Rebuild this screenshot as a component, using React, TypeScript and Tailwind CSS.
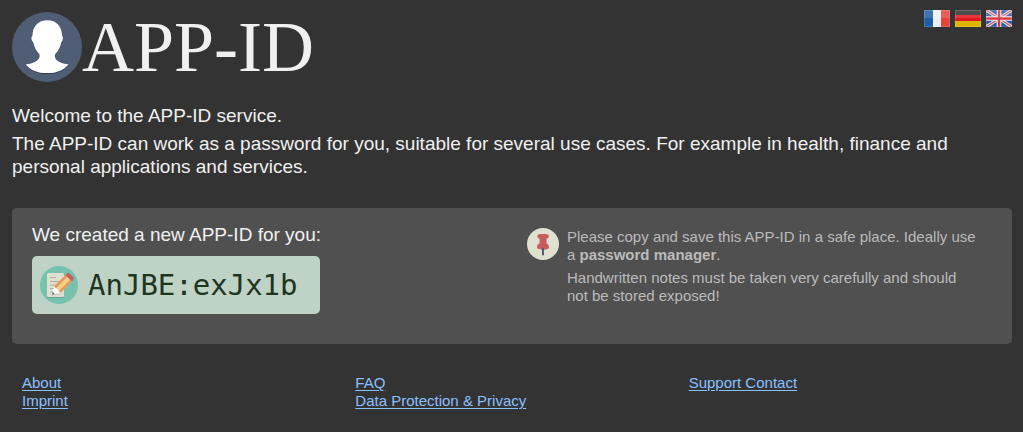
import React from "react";

function AvatarLogo() {
  return (
    <svg viewBox="0 0 70 70" className="size-[70px] shrink-0" aria-hidden="true">
      <defs>
        <filter id="soft" x="-20%" y="-20%" width="140%" height="140%">
          <feDropShadow dx="0" dy="1" stdDeviation="0.7" floodColor="#1c2638" floodOpacity="0.6" />
        </filter>
      </defs>
      <circle cx="35" cy="35" r="35" fill="#4f5e75" />
      <path
        filter="url(#soft)"
        fill="#fff"
        d="M35.3 8.3C44.5 8.3 49.8 14.5 50 23.5C51.3 24.8 50.9 29 49.2 30.4C48.4 35 46 39 43.2 42C42 45.5 44 48.4 48 50.2C50.6 51.4 53.5 52 56.5 52.4C51 58.4 43.5 61.1 35.2 61.1C26.7 61.1 19 58.4 13.7 52.4C16.8 52 19.6 51.4 22.2 50.2C26.4 48.4 28.6 45.5 27.4 42C24.6 39 22.2 35 21.4 30.4C19.3 29 18.9 24.8 20.5 23.5C20.7 14.5 26.1 8.3 35.3 8.3Z"
      />
    </svg>
  );
}

function Gloss() {
  return (
    <>
      <rect width="26" height="8" fill="#fff" opacity="0.14" />
      <rect x="0.5" y="0.5" width="25" height="16" fill="none" stroke="#fff" strokeOpacity="0.16" />
    </>
  );
}

function FlagFrance() {
  return (
    <svg viewBox="0 0 26 17" className="h-[17px] w-[26px]" aria-hidden="true">
      <rect width="9" height="17" fill="#1f5da6" />
      <rect x="9" width="8" height="17" fill="#eeeeee" />
      <rect x="17" width="9" height="17" fill="#e4443d" />
      <Gloss />
    </svg>
  );
}

function FlagGermany() {
  return (
    <svg viewBox="0 0 26 17" className="h-[17px] w-[26px]" aria-hidden="true">
      <rect width="26" height="6" fill="#303030" />
      <rect y="5" width="26" height="6" fill="#e3161b" />
      <rect y="11" width="26" height="6" fill="#dfb400" />
      <Gloss />
    </svg>
  );
}

function FlagBritain() {
  return (
    <svg viewBox="0 0 26 17" className="h-[17px] w-[26px]" aria-hidden="true">
      <rect width="26" height="17" fill="#3157a0" />
      <path d="M0 0L26 17M26 0L0 17" stroke="#d5d8e6" strokeWidth="3.4" />
      <path d="M0 0L26 17M26 0L0 17" stroke="#d45a60" strokeWidth="1.1" />
      <path d="M13 0V17M0 8.5H26" stroke="#eeeeee" strokeWidth="4.6" />
      <path d="M13 0V17M0 8.5H26" stroke="#d93840" strokeWidth="2.4" />
      <Gloss />
    </svg>
  );
}

function NoteIcon() {
  return (
    <svg viewBox="0 0 38 38" className="size-[38px] shrink-0" aria-hidden="true">
      <circle cx="19" cy="19" r="19" fill="#76c2af" />
      <rect x="7" y="8" width="17" height="24" rx="1.5" fill="#231f20" opacity="0.18" />
      <rect x="7" y="7" width="17" height="24" rx="1.5" fill="#e0e0d1" />
      <path d="M10 11.5H16M10 15.5H20M10 19H18M10 22.5H15M10 26H13" stroke="#a8a99c" strokeWidth="0.9" />
      <path d="M14.5 21.5L20.5 28.5L12 29.3Z" fill="#231f20" opacity="0.15" />
      <path d="M14 20.5L25.5 9L32 15.5L20.5 27Z" fill="#f5cf87" />
      <path d="M14 20.5L25.5 9L27.3 10.8L15.8 22.3Z" fill="#e0995e" />
      <path d="M18.7 25.2L30.2 13.7L32 15.5L20.5 27Z" fill="#e0995e" />
      <path d="M14 20.5L12 28.8L20.5 27L18.7 25.2L18 23.2L15.8 22.3Z" fill="#fff" />
      <path d="M12.7 26L12 28.8L14.9 28.2Z" fill="#4f5d73" />
      <path d="M25.5 9L27 7.6Q28.4 6.5 29.8 7.7L33.2 11.1Q34.3 12.5 33.2 14.1L32 15.5Z" fill="#c75c5c" />
    </svg>
  );
}

function PinIcon() {
  return (
    <svg viewBox="0 0 32 32" className="size-8 shrink-0" aria-hidden="true">
      <circle cx="16" cy="16" r="16" fill="#e0e0d1" />
      <path
        fill="#c75c5c"
        d="M10.5 7.4C10.5 6.5 13 6 16 6S21.7 6.5 21.7 7.4V9C21.7 10 20.7 10.4 19.5 10.7V15.5C21 16 22 17.2 22 19C22 20.8 19.3 21.8 16 21.8S10 20.8 10 19C10 17.2 11 16 12.6 15.5V10.7C11.3 10.4 10.5 10 10.5 9Z"
      />
      <path d="M16 20.5V26.5" stroke="#4f5d73" strokeWidth="2" strokeLinecap="round" />
    </svg>
  );
}

const languages = [
  { name: "Français", code: "fr", Flag: FlagFrance },
  { name: "Deutsch", code: "de", Flag: FlagGermany },
  { name: "English", code: "en", Flag: FlagBritain },
];

const footerColumns = [
  ["About", "Imprint"],
  ["FAQ", "Data Protection & Privacy"],
  ["Support Contact"],
];

export default function App() {
  return (
    <div className="min-h-screen bg-[#333333] pt-3 pr-[11px] pb-5 pl-3 font-['Liberation_Sans',Arial,sans-serif] text-[19px] leading-[23px] text-[#f0f0f0]">
      <header className="flex items-start justify-between">
        <div className="flex items-center">
          <AvatarLogo />
          <h1 className="font-['Liberation_Serif',serif] text-[72px] leading-[70px]">APP-ID</h1>
        </div>
        <nav aria-label="Language" className="-mt-0.5 flex gap-[5px]">
          {languages.map(({ name, code, Flag }) => (
            <a key={code} href={`#${code}`} aria-label={name}>
              <Flag />
            </a>
          ))}
        </nav>
      </header>

      <main>
        <div className="mt-[22px] flex flex-col gap-[5px]">
          <p>Welcome to the APP-ID service.</p>
          <p>
            The APP-ID can work as a password for you, suitable for several use cases. For example in
            health, finance and personal applications and services.
          </p>
        </div>

        <section className="mt-[30px] grid grid-cols-2 gap-[30px] rounded-[5px] bg-[#505050] px-5 pt-[15px] pb-[30px]">
          <div>
            <h2>We created a new APP-ID for you:</h2>
            <div className="mt-2.5 flex h-[58px] w-72 items-center gap-2.5 rounded-[5px] bg-[#bed2c5] px-2">
              <NoteIcon />
              <code className="font-['DejaVu_Sans_Mono',monospace] text-[29px] leading-9 text-[#20351f]">
                AnJBE:exJx1b
              </code>
            </div>
          </div>
          <div className="flex gap-2 pt-[5px] text-[15px] leading-[18px] text-[#bbbbbb]">
            <PinIcon />
            <div className="flex flex-col gap-[5px] pr-3">
              <p>
                Please copy and save this APP-ID in a safe place. Ideally use a{" "}
                <strong>password manager</strong>.
              </p>
              <p>Handwritten notes must be taken very carefully and should not be stored exposed!</p>
            </div>
          </div>
        </section>
      </main>

      <footer className="mt-[30px] grid grid-cols-3 text-[15px] leading-[18px]">
        {footerColumns.map((links) => (
          <ul key={links[0]} className="px-2.5">
            {links.map((label) => (
              <li key={label}>
                <a href="#" className="text-[#8ac0ff] underline underline-offset-2">
                  {label}
                </a>
              </li>
            ))}
          </ul>
        ))}
      </footer>
    </div>
  );
}
